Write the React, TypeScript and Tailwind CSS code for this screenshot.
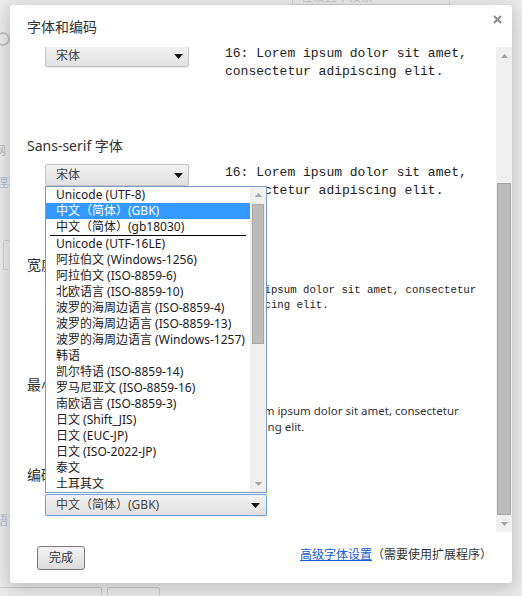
import clsx from 'clsx';

const UI = '"Noto Sans", "Noto Sans CJK SC", sans-serif';
const MONO = '"Liberation Mono", "Noto Sans CJK SC", monospace';

const encodings = [
  'Unicode (UTF-8)',
  '中文（简体）(GBK)',
  '中文（简体）(gb18030)',
  '---',
  'Unicode (UTF-16LE)',
  '阿拉伯文 (Windows-1256)',
  '阿拉伯文 (ISO-8859-6)',
  '北欧语言 (ISO-8859-10)',
  '波罗的海周边语言 (ISO-8859-4)',
  '波罗的海周边语言 (ISO-8859-13)',
  '波罗的海周边语言 (Windows-1257)',
  '韩语',
  '凯尔特语 (ISO-8859-14)',
  '罗马尼亚文 (ISO-8859-16)',
  '南欧语言 (ISO-8859-3)',
  '日文 (Shift_JIS)',
  '日文 (EUC-JP)',
  '日文 (ISO-2022-JP)',
  '泰文',
  '土耳其文',
];

function Caret() {
  return (
    <svg width="9" height="5" viewBox="0 0 9 5">
      <path d="M0 0h9L4.5 5z" fill="#111" />
    </svg>
  );
}

function ScrollArrow({ down }: { down?: boolean }) {
  return (
    <svg width="7" height="4" viewBox="0 0 7 4">
      <path d={down ? 'M0 0h7L3.5 4z' : 'M3.5 0L7 4H0z'} fill="#a3a3a3" />
    </svg>
  );
}

function Select({ value, className, focused }: { value: string; className: string; focused?: boolean }) {
  return (
    <div
      className={clsx(
        'flex h-[22px] shrink-0 items-center justify-between rounded-[2px] border bg-gradient-to-b from-[#f2f2f2] to-[#e1e1e1] pl-[10px] text-[12px] text-[#444] shadow-[0_1px_1px_rgba(0,0,0,0.08)]',
        focused ? 'border-[#6b9fe0]' : 'border-[#c3c3c3]',
        className,
      )}
    >
      <span className="leading-[20px]">{value}</span>
      <Caret />
    </div>
  );
}

function EncodingList() {
  return (
    <div className="absolute left-0 top-[22px] z-10 flex h-[307px] w-[222px] border border-[#7a9cc0] bg-white">
      <div className="flex-1">
        {encodings.map((e, i) =>
          e === '---' ? (
            <div key={i} className="mx-[4px] h-px bg-black" />
          ) : (
            <div
              key={i}
              className={clsx(
                'h-[16px] whitespace-nowrap pl-[10px] text-[12px] leading-[16px]',
                i === 1 ? 'bg-[#3399ff] text-white' : 'text-[#1a1a1a]',
              )}
            >
              {e}
            </div>
          ),
        )}
      </div>
      <div className="flex w-[16px] flex-col bg-[#f0f0f0]">
        <div className="flex h-[16px] items-center justify-center">
          <ScrollArrow />
        </div>
        <div className="mx-[2px] mt-px h-[140px] border border-[#a6a6a6] bg-[#bcbcbc]" />
        <div className="flex-1" />
        <div className="flex h-[16px] items-center justify-center">
          <ScrollArrow down />
        </div>
      </div>
    </div>
  );
}

export default function App() {
  return (
    <div className="relative h-[596px] w-[522px] overflow-hidden bg-[#efefef]" style={{ fontFamily: UI }}>
      {/* page behind the overlay */}
      <div className="absolute left-[292px] top-[-20px] flex h-[25px] w-[158px] items-end border border-[#d6d6d6] pl-[8px] text-[12px] leading-[14px] text-[#c4c4c4]">
        在设置中搜索
      </div>
      <div className="absolute left-[-4px] top-[32px] h-[14px] w-[14px] rounded-full border-2 border-[#c8c8c8]" />
      <div className="absolute left-[-6px] top-[142px] text-[12px] text-[#c0c0c0]">网</div>
      <div className="absolute left-[-4px] top-[174px] text-[12px] text-[#b4c2d8]">理容</div>
      <div className="absolute left-[3px] top-[240px] h-[30px] w-[12px] rounded-[2px] border border-[#d6d6d6]" />
      <div className="absolute left-[-4px] top-[512px] text-[12px] text-[#b4c2d8]">语言</div>
      <div className="absolute left-[-4px] top-[587px] h-[20px] w-[106px] rounded-[2px] border border-[#d0d0d0]" />
      <div className="absolute left-[107px] top-[587px] h-[20px] w-[53px] rounded-[2px] border border-[#d0d0d0]" />

      {/* dialog */}
      <div className="absolute left-[10px] top-[5px] flex h-[578px] w-[502px] flex-col overflow-hidden rounded-[3px] bg-white shadow-[0_4px_18px_4px_rgba(0,0,0,0.18)]">
        <div className="relative h-[42px] shrink-0 pl-[17px] pt-[12px] text-[14px] leading-[20px] text-[#333]">
          字体和编码
          <svg className="absolute right-[10px] top-[10px]" width="9" height="9" viewBox="0 0 9 9">
            <path d="M1 1l7 7M8 1L1 8" stroke="#8a8a8a" strokeWidth="2" />
          </svg>
        </div>

        <div className="flex h-[485px] shrink-0">
          <div className="flex-1 overflow-hidden">
            <div className="-mt-[29px] pl-[17px] text-[14px] text-[#303030]">
              <div className="h-[119px]">
                <div className="leading-[18px]">Serif 字体</div>
                <div className="mt-[9px] flex">
                  <Select value="宋体" className="ml-[18px] w-[144px] pr-[5px]" />
                  <div className="ml-[36px] w-[262px] text-[13px] leading-[18px] text-[#222]" style={{ fontFamily: MONO }}>
                    16: Lorem ipsum dolor sit amet, consectetur adipiscing elit.
                  </div>
                </div>
              </div>

              <div className="h-[119px]">
                <div className="leading-[18px]">Sans-serif 字体</div>
                <div className="mt-[9px] flex">
                  <div className="relative ml-[18px]">
                    <Select value="宋体" className="w-[144px] pr-[5px]" />
                    <EncodingList />
                  </div>
                  <div className="ml-[36px] w-[262px] text-[13px] leading-[18px] text-[#222]" style={{ fontFamily: MONO }}>
                    16: Lorem ipsum dolor sit amet, consectetur adipiscing elit.
                  </div>
                </div>
              </div>

              <div className="h-[120px]">
                <div className="leading-[18px]">宽度固定的字体</div>
                <div className="mt-[9px] flex">
                  <Select value="新宋体" className="ml-[18px] w-[144px] pr-[5px]" />
                  <div className="ml-[37px] w-[262px] text-[10.7px] leading-[15px] text-[#222]" style={{ fontFamily: MONO }}>
                    Lorem ipsum dolor sit amet, consectetur adipiscing elit.
                  </div>
                </div>
              </div>

              <div className="h-[90px]">
                <div className="leading-[18px]">最小字号</div>
                <div className="mt-[9px] flex">
                  <div className="ml-[18px] w-[144px]" />
                  <div className="ml-[38px] w-[262px] text-[11.5px] leading-[16px] text-[#333]">
                    6: Lorem ipsum dolor sit amet, consectetur adipiscing elit.
                  </div>
                </div>
              </div>

              <div>
                <div className="leading-[18px]">编码</div>
                <div className="mt-[10px] flex">
                  <Select value="中文（简体）(GBK)" className="ml-[18px] w-[222px] pr-[6px]" focused />
                </div>
              </div>
            </div>
          </div>

          <div className="flex w-[16px] flex-col bg-[#f0f0f0]">
            <div className="flex h-[17px] items-center justify-center">
              <ScrollArrow />
            </div>
            <div className="mx-[1px] mt-[119px] h-[332px] border border-[#a8a8a8] bg-[#bcbcbc]" />
            <div className="flex-1" />
            <div className="flex h-[17px] items-center justify-center">
              <ScrollArrow down />
            </div>
          </div>
        </div>

        <div className="flex flex-1 items-start justify-between pl-[27px] pr-[20px] pt-[14px]">
          <button className="h-[24px] w-[48px] rounded-[3px] border border-[#7a7a7a] bg-gradient-to-b from-[#f3f3f3] to-[#dcdcdc] text-[12px] text-[#333]">
            完成
          </button>
          <div className="mt-px text-[12px] leading-[16px] text-[#333]">
            <a className="text-[#1558d6] underline">高级字体设置</a>
            （需要使用扩展程序）
          </div>
        </div>
      </div>
    </div>
  );
}
